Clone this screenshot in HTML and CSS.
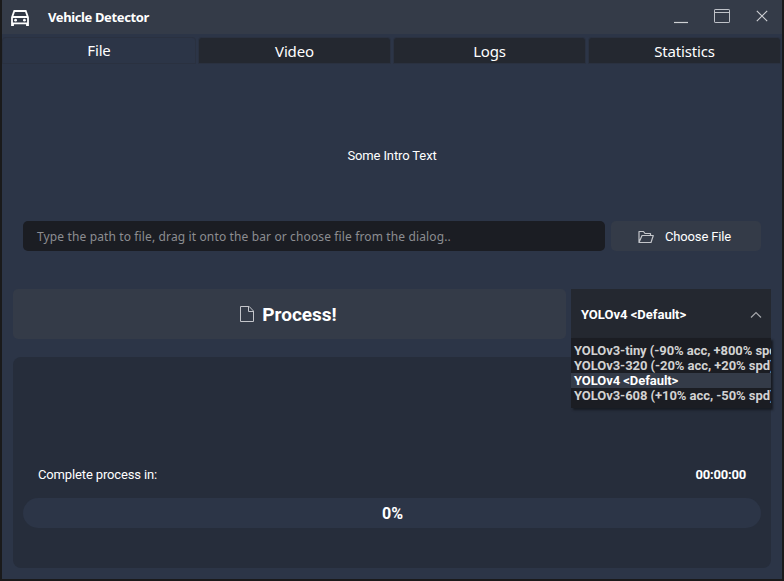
FILE: index.html
```html
<!DOCTYPE html>
<html lang="en">
<head>
<meta charset="utf-8">
<title>Vehicle Detector</title>
<link rel="stylesheet" href="styles.css">
</head>
<body>
<div class="window">
  <header class="titlebar">
    <svg class="car" width="18" height="17" viewBox="0 0 18 17" fill="none" stroke="#fff" stroke-width="1.8">
      <path d="M1 16V7.5L3.3 1H14.7L17 7.5V16M1 7H17M1 13.4H17M2 13V15.9M16 13V15.9"/>
      <circle cx="4.6" cy="10.2" r="1.4" fill="#fff" stroke="none"/><circle cx="13.4" cy="10.2" r="1.4" fill="#fff" stroke="none"/>
    </svg>
    <h1>Vehicle Detector</h1>
    <div class="controls">
      <svg width="14" height="16" viewBox="0 0 14 16"><path d="M0 14.5H14" stroke="#cfd1d5" stroke-width="1.2"/></svg>
      <svg width="16" height="16" viewBox="0 0 16 16" fill="none" stroke="#bfc2c8"><rect x=".5" y="1.5" width="15" height="13" rx=".6"/><path d="M1 4.5H15" /></svg>
      <svg width="12" height="16" viewBox="0 0 12 16"><path d="M.8 2.8L11.2 13.2M11.2 2.8L.8 13.2" stroke="#cfd1d5" stroke-width="1.1"/></svg>
    </div>
  </header>
  <nav class="tabs">
    <div class="tab active"><span>File</span></div>
    <div class="tab"><span>Video</span></div>
    <div class="tab"><span>Logs</span></div>
    <div class="tab"><span>Statistics</span></div>
  </nav>
  <main>
    <p class="intro">Some Intro Text</p>
    <div class="file-row">
      <div class="path"><span>Type the path to file, drag it onto the bar or choose file from the dialog..</span></div>
      <div class="choose">
        <svg width="16" height="14" viewBox="0 0 16 14" fill="none" stroke="#c3c5ca" stroke-width="1.2" stroke-linejoin="round"><path d="M1 12.5V1.5H5.5L7 3.5H12.5V5.5M1 12.5L4 5.5H15.3L13 12.5Z"/></svg>
        <span>Choose File</span>
      </div>
    </div>
    <div class="action-row">
      <div class="process">
        <svg width="14" height="16" viewBox="0 0 14 16" fill="none" stroke="#c3c5ca" stroke-linejoin="round"><path d="M.5 .5H9.2L13.5 5V15.5H.5ZM8.5 .5V5.5H13.5"/></svg>
        <span>Process!</span>
      </div>
      <div class="combo">
        <span>YOLOv4 &lt;Default&gt;</span>
        <svg width="12" height="8" viewBox="0 0 12 8" fill="none" stroke="#a5a7ab" stroke-width="1.2"><path d="M1 6.5L6 1.5L11 6.5"/></svg>
        <ul class="menu">
          <li>YOLOv3-tiny (-90% acc, +800% spd)</li>
          <li>YOLOv3-320 (-20% acc, +20% spd)</li>
          <li class="selected">YOLOv4 &lt;Default&gt;</li>
          <li>YOLOv3-608 (+10% acc, -50% spd)</li>
        </ul>
      </div>
    </div>
    <section class="panel">
      <div class="timing"><span>Complete process in:</span><b>00:00:00</b></div>
      <div class="progress">0%</div>
    </section>
  </main>
</div>
</body>
</html>
```
FILE: styles.css
```css
* { box-sizing: border-box; }
body {
  margin: 0;
  height: 581px;
  padding: 0 2px 2px;
  overflow: hidden;
  background: #1a1a1b;
  color: #fff;
  font: 13px/16px Roboto, sans-serif;
}
svg { display: block; flex: none; }
.window { height: 579px; background: #2c3547; }
.titlebar {
  display: flex;
  align-items: center;
  height: 34px;
  padding: 0 14px 0 9px;
  background: #343b48;
}
.car { margin-top: 2px; }
.titlebar h1 {
  margin: 0 auto 0 19px;
  font: 700 13px/18px "Noto Sans", sans-serif;
  letter-spacing: -.38px;
}
.controls { display: flex; gap: 26px; margin-top: -3px; }
.tabs {
  display: grid;
  grid-template-columns: 192px 191px 191px 191px;
  gap: 4px;
  height: 29px;
  padding: 4px 2px 0 1px;
}
.tab {
  display: flex;
  align-items: center;
  justify-content: center;
  height: 25px;
  border-radius: 3px 3px 0 0;
  background: #242830;
  font: 15px/20px "Noto Sans", sans-serif;
  letter-spacing: -.15px;
  box-shadow: 0 0 0 1px #2a3140;
}
.tab.active { background: #2c3547; }
.tab.active span { margin-top: -2px; }
main { padding: 85px 11px 0; }
.intro { margin: 0; text-align: center; letter-spacing: -.12px; }
.file-row { display: flex; gap: 6px; padding: 57px 10px 0; }
.path {
  display: flex;
  align-items: center;
  width: 582px;
  height: 30px;
  padding: 2px 0 0 14px;
  border-radius: 5px;
  background: #1b1d23;
  color: #8c8d91;
  font: 12px/16px "Noto Sans", sans-serif;
  letter-spacing: .13px;
  white-space: nowrap;
}
.choose {
  display: flex;
  align-items: center;
  gap: 11px;
  width: 150px;
  height: 30px;
  padding: 1px 0 0 27px;
  border-radius: 5px;
  background: #343b48;
  letter-spacing: -.15px;
}
.action-row { display: flex; gap: 5px; padding-top: 38px; }
.process {
  display: flex;
  align-items: center;
  justify-content: center;
  gap: 8px;
  width: 553px;
  height: 50px;
  padding-right: 2px;
  border-radius: 5px;
  background: #343b48;
  font-size: 19px;
  line-height: 24px;
  font-weight: 700;
}
.process span { margin-top: 1px; }
.combo {
  position: relative;
  display: flex;
  align-items: center;
  justify-content: space-between;
  width: 200px;
  height: 50px;
  padding: 1px 9px 0 10px;
  background: #242830;
  font-weight: 700;
}
.menu {
  position: absolute;
  z-index: 1;
  top: 49px;
  left: 0;
  width: 200px;
  height: 70px;
  margin: 0;
  padding: 5px 0;
  background: #1b1d23;
  box-shadow: 2px 2px 2px #171b23;
  color: #d2d2d2;
  letter-spacing: -.06px;
  list-style: none;
}
.menu li {
  height: 15px;
  padding-left: 3px;
  overflow: hidden;
  line-height: 15px;
  white-space: nowrap;
}
.menu .selected { background: #343b48; color: #fff; }
.panel {
  height: 211px;
  margin-top: 18px;
  padding: 110px 10px 0;
  border-radius: 8px;
  background: #262d3b;
}
.timing {
  display: flex;
  justify-content: space-between;
  padding: 0 15px;
  letter-spacing: -.14px;
}
.timing b { letter-spacing: -.2px; }
.progress {
  height: 30px;
  margin-top: 15px;
  padding: 1px 0 0 1px;
  border-radius: 15px;
  background: #2c3547;
  font-size: 16px;
  font-weight: 700;
  line-height: 30px;
  text-align: center;
}
```
